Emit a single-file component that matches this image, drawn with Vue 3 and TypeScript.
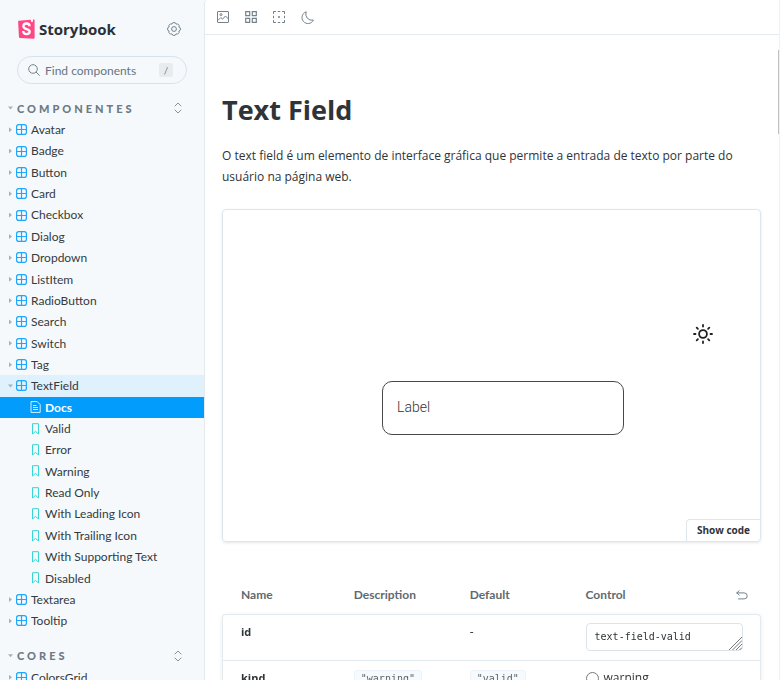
<script setup lang="ts">
import { ref } from 'vue'

interface Row {
  name: string
  kind: 'component' | 'open' | 'page' | 'story'
}

const component = (name: string): Row => ({ name, kind: 'component' })
const story = (name: string): Row => ({ name, kind: 'story' })

const groups: { title: string; rows: Row[] }[] = [
  {
    title: 'Componentes',
    rows: [
      ...['Avatar', 'Badge', 'Button', 'Card', 'Checkbox', 'Dialog', 'Dropdown', 'ListItem', 'RadioButton', 'Search', 'Switch', 'Tag'].map(component),
      { name: 'TextField', kind: 'open' },
      { name: 'Docs', kind: 'page' },
      ...['Valid', 'Error', 'Warning', 'Read Only', 'With Leading Icon', 'With Trailing Icon', 'With Supporting Text', 'Disabled'].map(story),
      ...['Textarea', 'Tooltip'].map(component),
    ],
  },
  { title: 'Cores', rows: [component('ColorsGrid')] },
]

const search = ref('')
const idValue = ref('text-field-valid')
const fieldValue = ref('')
const kindValue = ref('')
</script>

<template>
  <div class="shell">
    <nav class="sidebar" aria-label="Stories">
      <header class="brand">
        <a href="#" class="logo">
          <svg width="17" height="20" viewBox="0 0 17 20" aria-hidden="true">
            <path d="M.8 1.7 15.7.6a.8.8 0 0 1 .9.8v17.5a.8.8 0 0 1-.9.8l-13.8-.6a.9.9 0 0 1-.9-.8L.1 2.6a.9.9 0 0 1 .7-.9Z" fill="#ff4785" />
            <path d="M12.9 0h2v3.2l-.9-.7-.9.7Z" fill="#fff" />
            <path d="M11.6 7.3c0-1.9-1.2-2.8-3-2.8s-3.2 1-3.2 2.7c0 3.4 6.300 2.400 6.300 5.400 0 1.700-1.300 2.500-3.200 2.500-2.100 0-3.300-.9-3.300-3" fill="none" stroke="#fff" stroke-width="2.300" />
          </svg>
          <span>Storybook</span>
        </a>
        <button class="icon-button" type="button" aria-label="Settings">
          <svg width="14" height="14" viewBox="0 0 14 14" fill="none" stroke="#73828c" aria-hidden="true">
            <path d="M5.6.9 Q7 .2 8.400.9 L9.100 2.100 10.600 1.900 12.100 3.400 11.900 4.900 13.100 5.600 Q13.800 7 13.100 8.400 L11.900 9.100 12.100 10.600 10.600 12.100 9.100 11.900 8.400 13.100 Q7 13.800 5.600 13.100 L4.900 11.900 3.400 12.100 1.900 10.600 2.100 9.100.9 8.400 Q.2 7 .9 5.600 L2.100 4.900 1.900 3.400 3.400 1.900 4.900 2.100Z" stroke-linejoin="round" />
            <circle cx="7" cy="7" r="2.400" />
          </svg>
        </button>
      </header>

      <label class="search">
        <svg width="12" height="12" viewBox="0 0 12 12" fill="none" stroke="#73828c" aria-hidden="true">
          <circle cx="5" cy="5" r="4.300" />
          <path d="m8.200 8.200 3.200 3.200" stroke-linecap="round" />
        </svg>
        <input v-model="search" type="text" placeholder="Find components" aria-label="Find components" />
        <kbd>/</kbd>
      </label>

      <section v-for="group in groups" :key="group.title" class="group">
        <div class="group-head">
          <button class="group-title" type="button">
            <i class="caret down"></i>{{ group.title }}
          </button>
          <button class="icon-button" type="button" aria-label="Expand all">
            <svg width="8" height="12" viewBox="0 0 8 12" fill="none" stroke="#84929b" stroke-linecap="round" stroke-linejoin="round" aria-hidden="true">
              <path d="M1 4 4 1l3 3M1 8l3 3 3-3" />
            </svg>
          </button>
        </div>
        <ul>
          <li v-for="row in group.rows" :key="row.name">
            <a href="#" class="row" :class="row.kind">
              <template v-if="row.kind === 'component' || row.kind === 'open'">
                <i class="caret" :class="{ down: row.kind === 'open' }"></i>
                <svg width="11" height="11" viewBox="0 0 11 11" fill="none" stroke="#1ea7fd" aria-hidden="true">
                  <rect x=".6" y=".6" width="9.800" height="9.800" rx="2.200" stroke-width="1.200" />
                  <path d="M5.500.6v9.800M.6 5.500h9.800" stroke-width="1.200" />
                </svg>
              </template>
              <svg v-else-if="row.kind === 'page'" width="11" height="12" viewBox="0 0 11 12" fill="none" stroke="#d6f0ff" aria-hidden="true">
                <path d="M1 .6h6.200l3 3v7.800H1ZM3 4.500h3.500M3 6.500h5M3 8.500h5" />
              </svg>
              <svg v-else width="11" height="12" viewBox="0 0 11 12" fill="none" stroke="#37d5d3" aria-hidden="true">
                <path d="M2.500.7h6v10.300l-3-2.600-3 2.600Z" />
              </svg>
              <span>{{ row.name }}</span>
            </a>
          </li>
        </ul>
      </section>
    </nav>

    <main class="main">
      <div class="toolbar">
        <button class="icon-button" type="button" aria-label="Background">
          <svg width="12" height="12" viewBox="0 0 12 12" fill="none" stroke="#73828c" aria-hidden="true">
            <rect x=".5" y=".5" width="11" height="11" rx=".5" />
            <circle cx="4" cy="3.600" r="1" />
            <path d="m.8 9.500 3-3 1.700 1.700 3-3.200 3 3" />
          </svg>
        </button>
        <button class="icon-button" type="button" aria-label="Grid">
          <svg width="12" height="12" viewBox="0 0 12 12" fill="none" stroke="#73828c" aria-hidden="true">
            <path d="M.7.7h4v4h-4ZM7.300.7h4v4h-4ZM.7 7.300h4v4h-4ZM7.300 7.300h4v4h-4Z" stroke-width="1.200" />
          </svg>
        </button>
        <button class="icon-button" type="button" aria-label="Outline">
          <svg width="12" height="12" viewBox="0 0 12 12" fill="none" stroke="#73828c" aria-hidden="true">
            <path d="M.5 3V.5H3M4.800.5h2.400M9 .5h2.500V3M11.500 4.800v2.400M11.500 9v2.500H9M7.200 11.500H4.800M3 11.500H.5V9M.5 7.200V4.800" />
            <circle cx="6" cy="6" r=".6" fill="#73828c" />
          </svg>
        </button>
        <button class="icon-button" type="button" aria-label="Dark mode">
          <svg width="13" height="13" viewBox="0 0 13 13" fill="none" stroke="#73828c" aria-hidden="true">
            <path d="M5.200.8a6 6 0 1 0 7.200 8.300A6.200 6.200 0 0 1 5.200.8Z" stroke-linejoin="round" />
          </svg>
        </button>
      </div>

      <div class="docs">
        <h1>Text Field</h1>
        <p>O text field é um elemento de interface gráfica que permite a entrada de texto por parte do usuário na página web.</p>

        <div class="preview">
          <div class="canvas">
            <button class="icon-button theme" type="button" aria-label="Toggle theme">
              <svg width="20" height="20" viewBox="0 0 20 20" fill="none" stroke="#1f1f1f" stroke-width="1.800" stroke-linecap="round" aria-hidden="true">
                <circle cx="10" cy="10" r="3.900" />
                <path d="M10 1v1.500M10 17.500V19M1 10h1.500M17.500 10H19M3.700 3.700l1.200 1.200M15.100 15.100l1.200 1.200M3.700 16.300l1.200-1.200M15.100 4.900l1.200-1.200" />
              </svg>
            </button>
            <label class="field">
              <span>Label</span>
              <input v-model="fieldValue" type="text" />
            </label>
          </div>
          <button class="show-code" type="button">Show code</button>
        </div>

        <table>
          <thead>
            <tr>
              <th scope="col">Name</th>
              <th scope="col">Description</th>
              <th scope="col">Default</th>
              <th scope="col">
                <div class="control-head">
                  Control
                  <button class="icon-button" type="button" aria-label="Reset controls">
                    <svg width="12" height="10" viewBox="0 0 12 10" fill="none" stroke="#73828c" stroke-linecap="round" stroke-linejoin="round" aria-hidden="true">
                      <path d="M3.200.7.8 2.900l2.400 2.200M.8 2.900h7.400a3 3 0 0 1 0 6H2.500" />
                    </svg>
                  </button>
                </div>
              </th>
            </tr>
          </thead>
          <tbody>
            <tr>
              <td class="name">id</td>
              <td></td>
              <td>-</td>
              <td>
                <div class="textarea-wrap">
                  <textarea v-model="idValue" rows="1" aria-label="id"></textarea>
                  <svg class="grip" width="13" height="13" viewBox="0 0 13 13" stroke="#777" aria-hidden="true">
                    <path d="M0 13 13 0M3.500 13 13 3.500M7 13l6-6M10.500 13l2.500-2.500" />
                  </svg>
                </div>
              </td>
            </tr>
            <tr>
              <td class="name">kind</td>
              <td><code>"warning"</code></td>
              <td><code>"valid"</code></td>
              <td>
                <label class="radio"><input v-model="kindValue" type="radio" name="kind" value="warning" />warning</label>
              </td>
            </tr>
          </tbody>
        </table>
      </div>
      <div class="scroll-thumb"></div>
    </main>
  </div>
</template>

<style>
body {
  margin: 0;
  background: #f6f9fc;
}
</style>

<style scoped>
* {
  box-sizing: border-box;
}

.shell {
  display: flex;
  height: 100vh;
  overflow: hidden;
  color: #2e3438;
  font-family: "Open Sans", "Noto Sans", sans-serif;
  font-size: 12px;
}

button {
  padding: 0;
  border: 0;
  background: none;
  color: inherit;
  font: inherit;
}

.icon-button {
  display: flex;
  align-items: center;
  justify-content: center;
}

svg {
  flex: none;
}

.sidebar {
  flex: none;
  width: 204px;
  background: #f6f9fc;
  font-family: Lato, sans-serif;
  font-size: 12px;
}

.brand {
  display: flex;
  align-items: center;
  justify-content: space-between;
  height: 56px;
  padding: 2px 23px 0 18px;
}

.logo {
  display: flex;
  align-items: center;
  gap: 4px;
  color: #2b3035;
  font-family: "Open Sans", sans-serif;
  font-size: 15px;
  font-weight: 700;
  text-decoration: none;
}

.search {
  display: flex;
  align-items: center;
  gap: 5px;
  height: 28px;
  margin: 0 17px 13px;
  padding: 0 13px 0 10px;
  border: 1px solid #d9e3ea;
  border-radius: 14px;
}

.search input {
  flex: 1;
  min-width: 0;
  padding: 0;
  border: 0;
  outline: 0;
  background: none;
  font: inherit;
}

.search input::placeholder {
  color: #66757f;
  opacity: 1;
}

kbd {
  width: 14px;
  border-radius: 2px;
  background: #e8ecef;
  color: #73828c;
  font-family: inherit;
  font-size: 10px;
  line-height: 14px;
  text-align: center;
}

.group {
  margin-bottom: 13px;
}

.group-head {
  display: flex;
  align-items: center;
  justify-content: space-between;
  height: 22px;
  padding: 0 22px 0 8px;
}

.group-title {
  display: flex;
  align-items: center;
  gap: 4px;
  color: #6b7a84;
  font-size: 11px;
  font-weight: 900;
  letter-spacing: 3px;
  text-transform: uppercase;
}

ul {
  margin: 0;
  padding: 0;
  list-style: none;
}

.row {
  display: flex;
  align-items: center;
  padding-left: 8px;
  color: #333b40;
  line-height: 1.78;
  text-decoration: none;
}

.row span {
  margin-left: 4px;
}

.row.story,
.row.page {
  padding-left: 30px;
}

.row.open {
  background: #dff1fc;
}

.row.page {
  background: #029cfd;
  color: #fff;
  font-weight: 700;
}

.caret {
  flex: none;
  width: 5px;
  height: 5px;
  margin-right: 3px;
  background: #a7b1b8;
  clip-path: polygon(20% 0, 80% 50%, 20% 100%);
}

.caret.down {
  clip-path: polygon(0 20%, 100% 20%, 50% 80%);
}

.group-title .caret {
  margin-right: 0;
}

.main {
  position: relative;
  flex: 1;
  min-width: 0;
  border-right: 1px solid #edf1f4;
  border-left: 1px solid #e3e9ee;
  border-radius: 4px 0 0 0;
  background: #fff;
}

.toolbar {
  display: flex;
  align-items: center;
  gap: 16px;
  height: 35px;
  padding: 0 12px;
  border-bottom: 1px solid #e3eaf0;
}

.scroll-thumb {
  position: absolute;
  top: 50px;
  right: 0;
  width: 1px;
  height: 84px;
  background: #bfc1c3;
}

.docs {
  padding: 55px 18px 0 17px;
}

h1 {
  margin: 0 0 15px;
  font-size: 27px;
  font-weight: 700;
  line-height: 40px;
}

p {
  margin: 0;
  line-height: 21px;
}

.preview {
  display: flex;
  flex-direction: column;
  align-items: flex-end;
  margin: 22px 0 43px;
  border: 1px solid #dfe6eb;
  border-radius: 4px;
  box-shadow: 0 1px 3px rgba(0, 0, 0, 0.1);
}

.canvas {
  display: flex;
  flex-direction: column;
  align-items: center;
  gap: 37px;
  width: 100%;
  padding: 114px 47px 84px 70px;
}

.theme {
  align-self: flex-end;
}

.field {
  display: flex;
  align-items: center;
  width: 242px;
  height: 54px;
  padding: 0 14px 3px;
  border: 1px solid #484848;
  border-radius: 10px;
  color: #333;
  font-family: Roboto, sans-serif;
  font-size: 14px;
  font-weight: 300;
}

.field input {
  flex: 1;
  min-width: 0;
  border: 0;
  outline: 0;
  background: none;
  font: inherit;
}

.show-code {
  padding: 0 10px;
  border-top: 1px solid #dfe6eb;
  border-left: 1px solid #dfe6eb;
  border-radius: 4px 0 0 0;
  font-size: 10px;
  font-weight: 700;
  line-height: 21px;
}

table {
  width: 100%;
  border-collapse: separate;
  border-spacing: 0;
  table-layout: fixed;
}

th {
  width: 21.5%;
  padding: 0 10px 9px;
  color: #5f6a70;
  font-family: Lato, sans-serif;
  font-size: 12px;
  font-weight: 700;
  line-height: 20px;
  text-align: left;
}

th:first-child {
  width: 22.6%;
  padding-left: 19px;
}

th:last-child {
  width: auto;
}

.control-head {
  display: flex;
  align-items: center;
  justify-content: space-between;
  padding-right: 3px;
}

tbody {
  filter: drop-shadow(0 1px 2px rgba(0, 0, 0, 0.08));
}

td {
  padding: 8px 10px 9px;
  border-top: 1px solid #e3eaee;
  background: #fff;
  line-height: 18px;
  vertical-align: top;
}

td:first-child {
  padding-left: 18px;
  border-left: 1px solid #e3eaee;
}

td:last-child {
  padding-right: 17px;
  border-right: 1px solid #e3eaee;
}

tbody tr:first-child td:first-child {
  border-top-left-radius: 4px;
}

tbody tr:first-child td:last-child {
  border-top-right-radius: 4px;
}

.name {
  font-size: 11px;
  font-weight: 700;
}

.textarea-wrap {
  position: relative;
  display: flex;
}

textarea {
  display: block;
  width: 100%;
  height: 28px;
  padding: 5px 8px;
  overflow: hidden;
  border: 1px solid #dbe4ea;
  border-radius: 4px;
  outline: 0;
  resize: none;
  background: #fff;
  color: #2e3438;
  font-family: "DejaVu Sans Mono", monospace;
  font-size: 10px;
  line-height: 16px;
}

.grip {
  position: absolute;
  right: 1px;
  bottom: 1px;
}

code {
  display: inline-block;
  padding: 0 6px;
  border: 1px solid #ecf4f9;
  border-radius: 3px;
  background: #f7fafc;
  color: #5a646b;
  font-family: "DejaVu Sans Mono", monospace;
  font-size: 10px;
  line-height: 16px;
}

.radio {
  display: flex;
  align-items: center;
  gap: 5px;
}

.radio input {
  width: 13px;
  height: 13px;
  margin: 0;
}
</style>
